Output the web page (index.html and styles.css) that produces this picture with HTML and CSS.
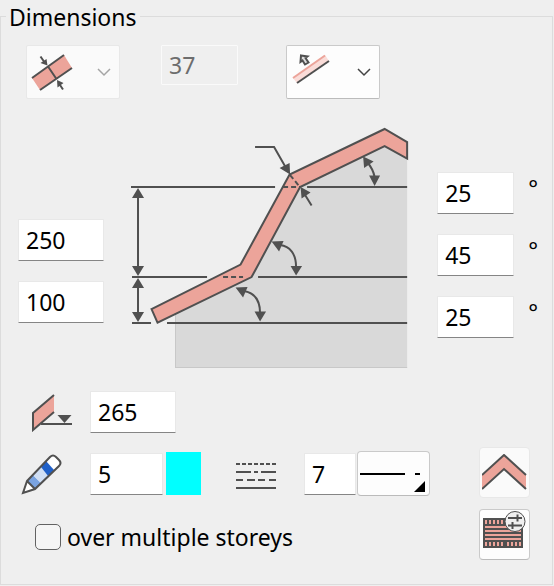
FILE: index.html
```html
<!DOCTYPE html>
<html lang="en">
<head>
<meta charset="utf-8">
<meta name="viewport" content="width=device-width, initial-scale=1">
<title>Dimensions</title>
<link rel="stylesheet" href="styles.css">
</head>
<body>
<fieldset class="panel">
  <legend class="panel-title">Dimensions</legend>

  <div class="top-row">
    <button type="button" class="button menu-button" disabled aria-label="Thickness direction">
      <svg width="42" height="38" viewBox="31 54 42 38" aria-hidden="true">
        <path class="tile" d="M32 79 64 56 72 69 40 91z"/>
        <path class="line" d="M32 79 64 56M40 91 72 69M48 67.500 56.500 80M40.500 57.500 45 64M63 90.500 59 84.500"/>
        <path class="solid" d="M47.500 66.500 40.500 64 46.500 60zM57 81 57.500 88.500 63.500 84z"/>
      </svg>
      <svg class="chevron" width="14" height="9" viewBox="0 0 14 9" aria-hidden="true"><path d="M1 1 7 7 13 1"/></svg>
    </button>
    <input class="field field-medium" type="text" value="37" aria-label="Thickness" disabled>
    <button type="button" class="button menu-button last" aria-label="Reference side">
      <svg width="42" height="38" viewBox="291 54 42 38" aria-hidden="true">
        <path class="tile-light" d="M293 79 325 56 329 62 297 84z"/>
        <path class="line-accent" d="M293 79 325 56.500"/>
        <path class="line" d="M297 84 329 62"/>
        <path class="hollow" d="M301 56.500 307.500 57.500 305.500 59 308.500 63.500 305 65.500 302.500 61.500 300.500 63z"/>
      </svg>
      <svg class="chevron" width="14" height="9" viewBox="0 0 14 9" aria-hidden="true"><path d="M1 1 7 7 13 1"/></svg>
    </button>
  </div>

  <div class="profile">
    <div class="heights">
      <input class="field" type="text" value="250" aria-label="Upper height">
      <input class="field" type="text" value="100" aria-label="Lower height">
    </div>
    <svg class="diagram" viewBox="120 120 300 255" role="img" aria-label="Roof profile">
      <path class="wall" d="M175 314 251 277 300 187 384 146 407 158V368H175z"/>
      <path class="edge" d="M175.500 314V367.500H407"/>
      <path class="tile outline" d="M151.500 309 240.500 264.500 289.500 174.500 384.500 129 407 142V158.500L384.500 146 300 187 251.500 277 157.500 322.500z"/>
      <path class="line" d="M131 187H275M307 187H407M132 277H207M258 277H407M132 323H151M167 323H407M138 196V268M138 286V314"/>
      <path class="line" d="M255 147H274L286 168M311.500 205.500 305 195"/>
      <path class="line dashed" d="M223 277H243M283 187H300M290 175 299 186"/>
      <path class="solid" d="M138 188 144 198H132zM138 276 132 266H144zM138 278 144 288H132zM138 322 132 312H144z"/>
      <path class="solid" d="M290 174.500 279.500 168 289.500 163zM300.500 187 301.500 198.500 310.500 192.500z"/>
      <path class="line" d="M367 162Q373 169 374.500 177M280 245C290 246 296 254 296 267M244 291C255 293 260 301 260 313"/>
      <path class="solid" d="M363 156.500 364 168 373.500 161.500zM374.500 186 369 175.500H380zM271.500 241.500 283.500 241 279 251.500zM296 275.500 290.500 266H302zM235.500 287.500 247.500 287 243 297.500zM260 321.500 254.500 311.500H266z"/>
    </svg>
    <div class="angles">
      <label class="angle"><input class="field field-medium" type="text" value="25" aria-label="Upper angle"><span>°</span></label>
      <label class="angle"><input class="field field-medium" type="text" value="45" aria-label="Middle angle"><span>°</span></label>
      <label class="angle"><input class="field field-medium" type="text" value="25" aria-label="Lower angle"><span>°</span></label>
    </div>
  </div>

  <div class="lower">
    <div class="settings">
      <div class="setting">
        <svg class="setting-icon" width="72" height="40" viewBox="18 393 72 40" aria-hidden="true">
          <path class="tile" d="M33 414 54 396V413L33 431z"/>
          <path class="line" d="M54 396 33 414V431L54 413M41 425H72"/>
          <path class="solid" d="M57.500 416H71.500L64.500 424z"/>
        </svg>
        <input class="field" type="text" value="265" aria-label="Eaves height">
      </div>
      <div class="setting">
        <svg class="setting-icon" width="72" height="42" viewBox="18 454 72 42" aria-hidden="true">
          <path class="white" d="M27 482 50 458Q53 455 56 458L59 461Q62 464 59 467L35 490 23 494z"/>
          <path class="blue-mid" d="M27 482 33 476 41 484 35 490z"/>
          <path class="blue-light" d="M33 476 41 468 48 477 41 484z"/>
          <path class="blue" d="M41 468 46 462 54 471 48 477z"/>
          <path class="line" d="M27 482 50 458Q53 455 56 458L59 461Q62 464 59 467L35 490 23 494zM27 482 35 490"/>
        </svg>
        <input class="field field-pen" type="text" value="5" aria-label="Pen">
        <button type="button" class="swatch" aria-label="Pen colour"></button>
        <svg class="lines-icon" width="42" height="30" viewBox="235 460 42 30" aria-hidden="true">
          <path class="line" stroke-dasharray="4 2" d="M236 465H276"/>
          <path class="line" d="M236 473H251M254 473H258M261 473H276"/>
          <path class="line" d="M236 481H243M247 481H255M258 481H265M269 481H276M236 489H276"/>
        </svg>
        <input class="field field-small" type="text" value="7" aria-label="Line type">
        <button type="button" class="button line-button" aria-label="Choose line type">
          <svg width="71" height="43" viewBox="358 453 71 43" aria-hidden="true">
            <path class="sample" d="M360 475H405M415 475H420"/>
            <path d="M425 482V493H414z"/>
          </svg>
        </button>
      </div>
      <label class="check"><input type="checkbox"><span>over multiple storeys</span></label>
    </div>
    <div class="tools">
      <button type="button" class="button tool" disabled aria-label="Ridge">
        <svg width="45" height="38" viewBox="482 454 45 38" aria-hidden="true">
          <path class="tile" d="M482 475 504 455 526 475V489L504 469 482 489z"/>
          <path class="line" d="M482 475 504 455 526 475M482 489 504 469 526 489"/>
        </svg>
      </button>
      <button type="button" class="button tool" aria-label="Covering settings">
        <svg width="45" height="49" viewBox="483 510 45 49" aria-hidden="true">
          <path class="solid" d="M484 518H524V548H484z"/>
          <path class="tile" d="M486 520h2v4h-2zm4 0h2v4h-2zm4 0h2v4h-2zm4 0h2v4h-2zm4 0h2v4h-2zM486 526H522V528H486zM486 530H522V532H486zM486 534H522V536H486zM486 538H522V540H486zM486 542h2v4h-2zm4 0h2v4h-2zm4 0h2v4h-2zm4 0h2v4h-2zm4 0h2v4h-2zm6 0h2v4h-2zm4 0h2v4h-2zm4 0h2v4h-2zm4 0h2v4h-2z"/>
          <circle class="badge" cx="516" cy="521.500" r="10"/>
          <path class="line" d="M509 518H523M509 525.500H523M518.500 514.500V521.500M513.500 522V529"/>
        </svg>
      </button>
    </div>
  </div>
</fieldset>
</body>
</html>
```
FILE: styles.css
```css
* { box-sizing: border-box; }

body {
  margin: 0;
  background: #efefef;
  color: #000;
  font: 23px/32px "Noto Sans", "Open Sans", sans-serif;
}

svg { display: block; }

.panel {
  min-width: 0;
  margin: 0 1px 1px 0;
  padding: 12px 14px 24px 17px;
  border: 1px solid #dcdcdc;
}

.panel-title {
  margin-left: -12px;
  padding: 1px 3px 0;
}

.field {
  width: 86px;
  height: 42px;
  padding: 0 7px;
  border: 1px solid #e8e8e8;
  border-bottom-color: #858585;
  border-radius: 1px;
  background: #fff;
  color: #000;
  font: inherit;
}

.field:disabled {
  height: 40px;
  border: 1px solid #fafafa;
  background: #efefef;
  color: #6d6d6d;
}

.field-medium { width: 77px; }
.field-pen { width: 73px; }
.field-small { width: 52px; }

.button {
  padding: 0;
  border: 1px solid #cacaca;
  border-bottom-color: #bbb;
  border-radius: 2px;
  background: #fdfdfd;
}

.button:disabled {
  border-color: #e8e8e8;
  background: #fafafa;
}

.menu-button {
  display: flex;
  align-items: center;
  justify-content: space-between;
  width: 94px;
  height: 54px;
  padding: 0 8px 0 4px;
}

.top-row {
  display: flex;
  align-items: flex-start;
  gap: 41px;
  padding-left: 8px;
}

.last { margin-left: 7px; }

.chevron path { fill: none; stroke: #444; stroke-width: 1.500; }
.button:disabled .chevron path { stroke: #a5a5a5; }

.profile {
  display: grid;
  grid-template-columns: auto minmax(0, 1fr) auto;
  column-gap: 16px;
  margin-top: 21px;
}

.heights {
  display: flex;
  flex-direction: column;
  gap: 20px;
  padding-top: 99px;
}

.diagram { width: 100%; }

.angles {
  display: flex;
  flex-direction: column;
  gap: 20px;
  padding: 52px 0 0 1px;
}

.angle {
  display: flex;
  gap: 14px;
}

.lower {
  display: flex;
  justify-content: space-between;
  align-items: flex-end;
  margin-top: 16px;
  padding-right: 8px;
}

.settings {
  display: flex;
  flex-direction: column;
  gap: 18px;
}

.setting { display: flex; align-items: center; }

.swatch {
  width: 35px;
  height: 43px;
  margin-left: 3px;
  padding: 0;
  border: 0;
  background: #0ff;
}

.lines-icon { margin: 0 27px 0 34px; }

.line-button {
  height: 45px;
  margin-left: 1px;
  border-radius: 4px;
}

.sample { stroke: #000; stroke-width: 2; }

.check {
  display: flex;
  align-items: center;
  gap: 6px;
  height: 46px;
  margin-left: 17px;
}

.check input {
  appearance: none;
  width: 26px;
  height: 26px;
  margin: 0;
  border: 1px solid #626262;
  border-radius: 5px;
  background: #f5f5f5;
}

.check input:checked { background: #2060c8; }

.tools {
  display: flex;
  flex-direction: column;
  gap: 11px;
}

.tool {
  display: flex;
  align-items: center;
  justify-content: center;
  width: 51px;
  height: 51px;
  border-radius: 4px;
}

.tile { fill: #eca49a; }
.tile-light { fill: #fadcd8; }
.wall { fill: #d9d9d9; }
.edge { fill: none; stroke: #c8c8c8; }
.outline { stroke: #505050; stroke-width: 2; }
.line { fill: none; stroke: #505050; stroke-width: 2; }
.line-accent { stroke: #eca49a; stroke-width: 2; }
.dashed { stroke-dasharray: 5 3; }
.solid { fill: #505050; }
.hollow { fill: #dcdcdc; stroke: #505050; stroke-width: 2; }
.badge { fill: #f0f0f0; stroke: #505050; stroke-width: 1; }
.white { fill: #fff; }
.blue { fill: #2060c8; }
.blue-mid { fill: #7aa3e0; }
.blue-light { fill: #d0dff5; }
```
